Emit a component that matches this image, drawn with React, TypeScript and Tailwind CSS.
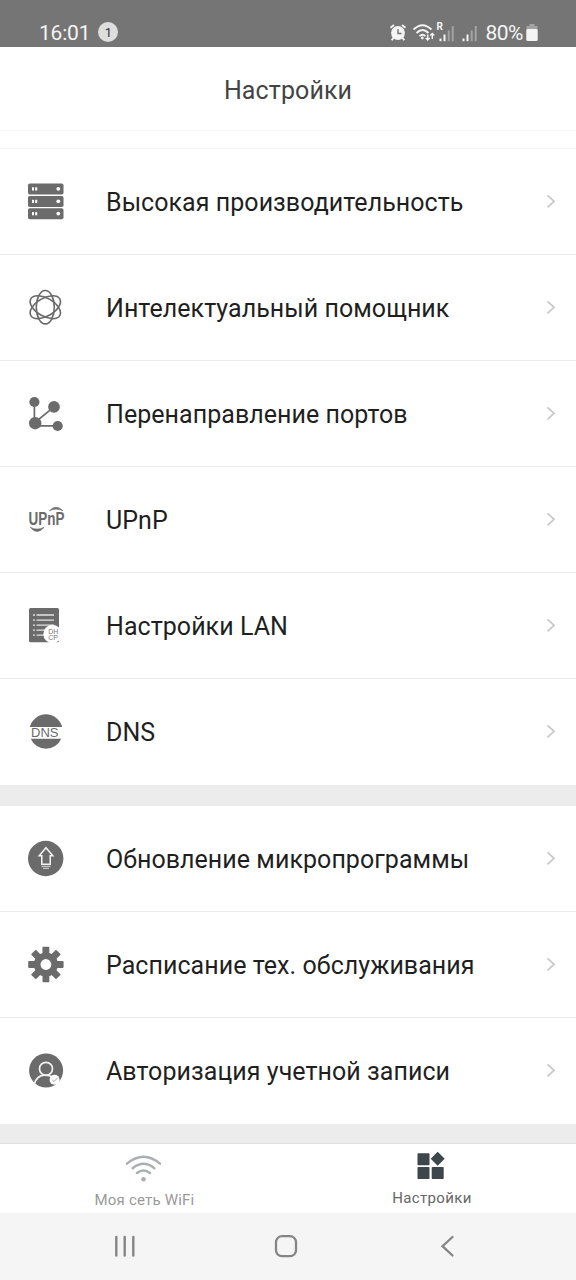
import React from 'react';

interface MenuItem {
  label: string;
  icon: React.ReactNode;
}

const GRAY = '#6b6b6b';

const Glyph = ({ children }: { children: React.ReactNode }) => (
  <svg width="48" height="48" viewBox="0 0 48 48" fill="none" className="shrink-0 overflow-visible">
    {children}
  </svg>
);

const ServerIcon = () => (
  <Glyph>
    {[5.5, 18, 30.3].map(y => (
      <g key={y}>
        <rect x="6" y={y} width="35.5" height="11" rx="1.8" fill={GRAY} />
        <rect x="10" y={y + 3.8} width="2" height="3.2" fill="#fff" />
        <rect x="13.2" y={y + 3.8} width="2" height="3.2" fill="#fff" />
        <circle cx="36.3" cy={y + 5.3} r="1.9" fill="#fff" />
      </g>
    ))}
  </Glyph>
);

const AtomIcon = () => (
  <Glyph>
    {[0, 60, 120].map(angle => (
      <ellipse
        key={angle}
        cx="23.3"
        cy="23.2"
        rx="9"
        ry="16.7"
        stroke={GRAY}
        strokeWidth="1.6"
        transform={`rotate(${angle} 23.3 23.2)`}
      />
    ))}
  </Glyph>
);

const PortsIcon = () => (
  <Glyph>
    <path d="M12.4 12v21L32 16.8M13.2 35.9H36" stroke={GRAY} strokeWidth="1.7" />
    <circle cx="12.4" cy="12" r="5.1" fill={GRAY} />
    <circle cx="32" cy="16.9" r="5.9" fill={GRAY} />
    <circle cx="13.2" cy="33.2" r="6.2" fill={GRAY} />
    <circle cx="35.7" cy="36" r="5.1" fill={GRAY} />
  </Glyph>
);

const UpnpIcon = () => (
  <Glyph>
    <g transform="translate(6.6 28.9) scale(0.77 1)">
      <text fontSize="17.5" fontWeight="700" fill={GRAY} className="font-['Liberation_Sans',sans-serif]">
        UPnP
      </text>
    </g>
    <path d="M27.4 14.8Q34 7.7 41 14.8Q34 11.4 27.4 14.8Z" fill={GRAY} stroke={GRAY} strokeWidth="0.6" />
    <path d="M8.2 31.2Q15 39.7 22.2 31.2Q15 35 8.2 31.2Z" fill={GRAY} stroke={GRAY} strokeWidth="0.6" />
  </Glyph>
);

const DhcpIcon = () => (
  <Glyph>
    <rect x="7" y="6" width="30" height="34.3" rx="1.5" fill={GRAY} />
    {[13, 18.2, 23.2, 28.2, 33.2].map(y => (
      <path key={y} d={`M11 ${y}h2M14.5 ${y}h17.5`} stroke="#e4e4e4" strokeWidth="1.3" />
    ))}
    <circle cx="30.5" cy="32" r="9.2" fill="#fff" />
    <g fill="#777" fontSize="7" className="font-['Liberation_Sans',sans-serif]">
      <text x="26.2" y="31.8">DH</text>
      <text x="26.2" y="37.6">CP</text>
    </g>
  </Glyph>
);

const DnsIcon = () => (
  <Glyph>
    <path d="M7.8 19a16.7 16.7 0 0 1 32.4 0z" fill={GRAY} />
    <path d="M8.7 30.8a16.7 16.7 0 0 0 30.6 0z" fill={GRAY} />
    <text x="9" y="29.4" fontSize="13" fill={GRAY} className="font-['Liberation_Sans',sans-serif]">
      DNS
    </text>
  </Glyph>
);

const UpdateIcon = () => (
  <Glyph>
    <circle cx="23.7" cy="23.5" r="17.7" fill={GRAY} />
    <path d="M24 12.7l6.8 8h-2.6v8.6h-8.4v-8.600h-2.6z" stroke="#f4f4f4" strokeWidth="1.5" />
    <path d="M19.500 31.3h9M21 33.3h6" stroke="#ddd" strokeWidth="1" />
  </Glyph>
);

const GearIcon = () => (
  <Glyph>
    {[0, 45, 90, 135].map(angle => (
      <rect
        key={angle}
        x="20.5"
        y="5.8"
        width="6.8"
        height="35.4"
        rx="0.8"
        fill={GRAY}
        transform={`rotate(${angle} 23.9 23.5)`}
      />
    ))}
    <circle cx="23.9" cy="23.5" r="12" fill={GRAY} />
    <circle cx="23.9" cy="23.5" r="5.4" fill="#fff" />
  </Glyph>
);

const AccountIcon = () => (
  <Glyph>
    <circle cx="24.1" cy="23.5" r="17" fill={GRAY} />
    <circle cx="24" cy="21.8" r="6.5" stroke="#f2f2f2" strokeWidth="1.7" />
    <path d="M12.5 36.5c1.6-5 5.4-8.1 9.5-8.4c4-.2 7.5.6 10 3.4" stroke="#f2f2f2" strokeWidth="1.7" />
    <circle cx="32.6" cy="32.7" r="5" fill="#fff" />
    <path d="M30.2 32.900l1.8 1.8 3.3-3.6" stroke="#999" strokeWidth="0.9" />
  </Glyph>
);

const networkItems: MenuItem[] = [
  { label: 'Высокая производительность', icon: <ServerIcon /> },
  { label: 'Интелектуальный помощник', icon: <AtomIcon /> },
  { label: 'Перенаправление портов', icon: <PortsIcon /> },
  { label: 'UPnP', icon: <UpnpIcon /> },
  { label: 'Настройки LAN', icon: <DhcpIcon /> },
  { label: 'DNS', icon: <DnsIcon /> },
];

const systemItems: MenuItem[] = [
  { label: 'Обновление микропрограммы', icon: <UpdateIcon /> },
  { label: 'Расписание тех. обслуживания', icon: <GearIcon /> },
  { label: 'Авторизация учетной записи', icon: <AccountIcon /> },
];

const MenuRow = ({ label, icon }: MenuItem) => (
  <button
    type="button"
    className="flex h-[106px] w-full shrink-0 items-center border-b border-[#ececec] pr-[19px] pl-[22px] text-left last:border-b-0"
  >
    {icon}
    <span className="ml-9 flex-1 pt-0.5 whitespace-nowrap text-[25px] tracking-[0.05px] text-[#1f1f1f]">{label}</span>
    <svg width="12" height="16" viewBox="0 0 12 16" fill="none">
      <path d="M2.5 1.3L9 7.3l-6.5 6" stroke="#c9c9c9" strokeWidth="1.8" />
    </svg>
  </button>
);

const SignalBars = () => (
  <svg width="16" height="18" viewBox="0 0 16 18">
    <rect x="0.5" y="13.5" width="2" height="2.7" fill="#f4f4f4" />
    <rect x="4.5" y="9.5" width="2" height="6.7" fill="#f4f4f4" />
    <rect x="8.7" y="5.5" width="2" height="10.7" fill="#a3a3a3" />
    <rect x="12.7" y="1" width="2" height="15.2" fill="#a3a3a3" />
  </svg>
);

const StatusBar = () => (
  <div className="flex h-[47px] shrink-0 items-end bg-[#757575] pr-[37px] pb-1 pl-[39px] text-[#f4f4f4]">
    <span className="text-[21px] leading-[20px] tracking-[-0.2px]">16:01</span>
    <span className="mb-px ml-2 flex size-5 items-center justify-center rounded-full bg-[#dedede] pt-px text-[13px] text-[#333]">
      1
    </span>
    <div className="ml-auto flex items-end">
      <svg width="20" height="20" viewBox="0 0 20 20" fill="none" className="mr-1">
        <circle cx="10" cy="10" r="6.9" fill="#f4f4f4" />
        <path d="M2.5 4.8L6 2M17.5 4.8L14 2M5.500 14.700L3.700 17.200M14.500 14.700l1.800 2.500" stroke="#f4f4f4" strokeWidth="1.9" />
        <path d="M10 6.200v4.300h3.500" stroke="#757575" strokeWidth="1.5" />
      </svg>
      <svg width="25" height="20" viewBox="0 0 25 20" fill="none" className="mr-0.5">
        <path
          d="M1.500 6.500Q10.500-2.200 19.500 6.500M4.500 10Q10.500 4.200 16.500 10M7.500 13.200Q10.500 10.200 13.500 13.200"
          stroke="#f4f4f4"
          strokeWidth="1.900"
        />
        <circle cx="10.300" cy="15" r="1.400" fill="#f4f4f4" />
        <path d="M15.700 11.500v5.500m-2-2l2 2 2-2M20.300 16v-5.500m-2 2l2-2 2 2" stroke="#f4f4f4" strokeWidth="1.400" />
      </svg>
      <div className="relative">
        <SignalBars />
        <span className="absolute -top-1 -left-0.5 text-[10px] leading-[12px] font-bold">R</span>
      </div>
      <div className="ml-[7px]">
        <SignalBars />
      </div>
      <span className="ml-2 text-[21px] leading-[20px] tracking-[-0.5px]">80%</span>
      <svg width="14" height="20" viewBox="0 0 14 20" className="ml-0.5">
        <path d="M4.500 1h5v2h3v4h-11v-4h3z" fill="#a3a3a3" />
        <rect x="1.300" y="6" width="11.400" height="12" rx="1.500" fill="#f4f4f4" />
      </svg>
    </div>
  </div>
);

const TabBar = () => (
  <nav className="flex h-[70px] shrink-0 border-t border-[#e0e0e0] bg-white">
    <button type="button" className="flex w-1/2 flex-col items-center pt-2.5 text-[#999]">
      <svg width="38" height="30" viewBox="0 0 38 30" fill="none" stroke="#a9afb2" strokeWidth="2.4" strokeLinecap="round">
        <path d="M2 9.700Q18.500-4 35 9.700M7.700 14.200Q18.500 5.500 29.300 14.200M12 19Q18.500 13.800 25 19" />
        <circle cx="18.500" cy="25.200" r="2.300" fill="#a9afb2" stroke="none" />
      </svg>
      <span className="mt-1.5 ml-px text-[15px] leading-[20px] tracking-[0.2px]">Моя сеть WiFi</span>
    </button>
    <button type="button" className="flex w-1/2 flex-col items-center pt-[7px] text-[#666]">
      <svg width="30" height="30" viewBox="0 0 30 30" fill="#3c464b">
        <rect x="0.500" y="2.300" width="12" height="12" rx="0.800" />
        <rect x="0.500" y="16" width="12" height="12" rx="0.800" />
        <rect x="14.700" y="16" width="12" height="12" rx="0.800" />
        <path d="M20.700 .7l7 7-7 7-7-7z" />
      </svg>
      <span className="mt-[7px] text-[15px] leading-[20px] tracking-[0.35px]">Настройки</span>
    </button>
  </nav>
);

const SystemNav = () => (
  <div className="flex h-[67px] shrink-0 items-center bg-[#f5f5f5] pr-[120px] pl-[114px]">
    <svg width="22" height="24" viewBox="0 0 22 24" stroke="#858585" strokeWidth="2.4" strokeLinecap="round">
      <path d="M2.3 2v18.600M10.700 2v18.600M19.300 2v18.600" />
    </svg>
    <svg width="24" height="24" viewBox="0 0 24 24" fill="none" className="ml-[138px]">
      <rect x="2" y="1.200" width="20" height="20" rx="6" stroke="#858585" strokeWidth="2.300" />
    </svg>
    <svg width="16" height="24" viewBox="0 0 16 24" fill="none" className="ml-auto">
      <path d="M12.500 2L2.500 11.200l10 9.300" stroke="#858585" strokeWidth="2.300" strokeLinecap="round" />
    </svg>
  </div>
);

export default function App() {
  return (
    <div className="flex h-[1280px] w-[576px] flex-col overflow-hidden bg-white font-['Roboto',sans-serif]">
      <StatusBar />
      <header className="flex h-[84px] shrink-0 items-center justify-center border-b border-[#f6f6f6] pt-1">
        <h1 className="text-[25px] tracking-[0.1px] text-[#444]">Настройки</h1>
      </header>
      <div className="h-[18px] shrink-0 border-b border-[#f6f6f6]" />
      <section className="h-[636px] shrink-0">
        {networkItems.map(item => (
          <MenuRow key={item.label} {...item} />
        ))}
      </section>
      <div className="h-[21px] shrink-0 bg-[#ececec]" />
      <section className="h-[318px] shrink-0">
        {systemItems.map(item => (
          <MenuRow key={item.label} {...item} />
        ))}
      </section>
      <div className="h-[19px] shrink-0 bg-[#ececec]" />
      <TabBar />
      <SystemNav />
    </div>
  );
}
